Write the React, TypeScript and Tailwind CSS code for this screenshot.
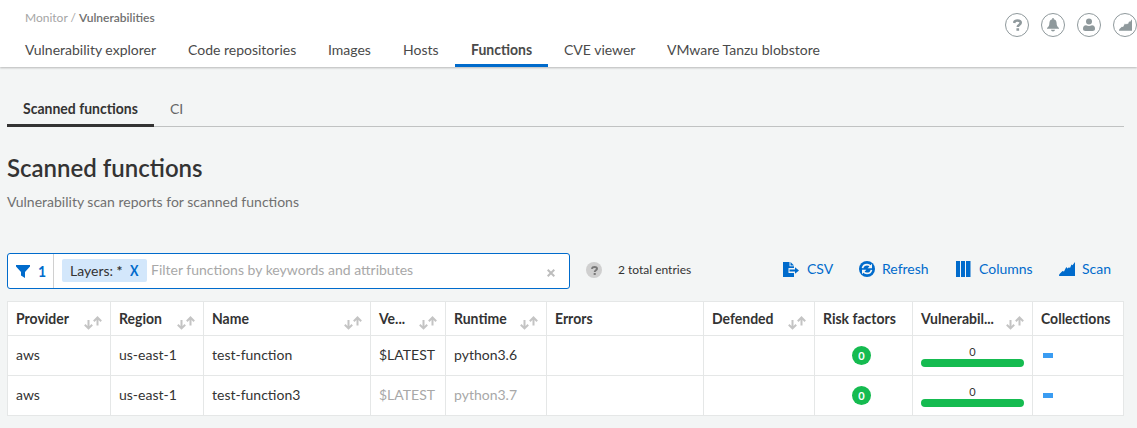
import React from "react";

const TABS: { label: string; width: string; active?: boolean }[] = [
  { label: "Vulnerability explorer", width: "w-[163px]" },
  { label: "Code repositories", width: "w-[140px]" },
  { label: "Images", width: "w-[75px]" },
  { label: "Hosts", width: "w-[68px]" },
  { label: "Functions", width: "w-[93px]", active: true },
  { label: "CVE viewer", width: "w-[103px]" },
  { label: "VMware Tanzu blobstore", width: "w-[185px]" },
];

const GRID =
  "grid grid-cols-[103px_93px_167px_75px_101px_157px_111px_98px_120px_91px]";

const HEADERS: { label: string; sortable?: boolean }[] = [
  { label: "Provider", sortable: true },
  { label: "Region", sortable: true },
  { label: "Name", sortable: true },
  { label: "Ve...", sortable: true },
  { label: "Runtime", sortable: true },
  { label: "Errors" },
  { label: "Defended", sortable: true },
  { label: "Risk factors" },
  { label: "Vulnerabil...", sortable: true },
  { label: "Collections" },
];

const ROWS = [
  { provider: "aws", region: "us-east-1", name: "test-function", version: "$LATEST", runtime: "python3.6", muted: false },
  { provider: "aws", region: "us-east-1", name: "test-function3", version: "$LATEST", runtime: "python3.7", muted: true },
];

function Strong({ children }: { children: React.ReactNode }) {
  return <span className="inline-block origin-[50%_74%] scale-y-110 font-bold">{children}</span>;
}

function SortIcon() {
  return (
    <svg className="mt-[6px] shrink-0" width="18" height="16" viewBox="0 0 18 16" fill="none" stroke="#c4c4c4" strokeWidth="2">
      <path d="M4.500 5v8.500M.8 9.700l3.700 3.700 3.700-3.700" />
      <path d="M13.500 10.500V2.500M9.800 6.200l3.700-3.700 3.700 3.700" />
    </svg>
  );
}

function AreaChart({ className }: { className: string }) {
  return (
    <svg className={className} viewBox="0 0 16 14" fill="currentColor">
      <path d="M0 14 .3 12.300 3.500 9 5 9.500 7.300 5 8.500 6.500 10 5.300 11 6 12.500 2.500 13.500 3.300 16 0V14Z" />
    </svg>
  );
}

function HeaderIcon({ children }: { children: React.ReactNode }) {
  return (
    <span className="flex size-6 shrink-0 items-center justify-center rounded-full border border-[#8f999c] text-[#8f999c]">
      {children}
    </span>
  );
}

function QuestionMark({ className }: { className: string }) {
  return (
    <svg className={className} viewBox="0 0 10 13" fill="none" stroke="currentColor" strokeWidth="2.800">
      <path d="M1.200 4.200C1.500 2.300 3 1.500 5 1.500c2.200 0 3.600 1 3.600 2.600 0 2.200-3.300 2-3.300 4.700" />
      <path d="M3.800 11.500h3" />
    </svg>
  );
}

export default function App() {
  return (
    <div className="flex h-[428px] w-[1137px] flex-col overflow-hidden bg-[#f3f5f5] font-['Lato',sans-serif] text-[14px] leading-5 whitespace-nowrap text-[#333]">
      <header className="flex h-[67px] shrink-0 justify-between bg-white shadow-[0_1px_2px_rgba(0,0,0,0.25)]">
        <div className="flex flex-col">
          <div className="mt-[10px] h-4 pl-[25px] text-[12px] leading-4 text-[#707070]">
            <span className="text-[#a5a5a5]">Monitor /</span> <span className="font-semibold">Vulnerabilities</span>
          </div>
          <nav className="mt-[9px] flex h-8 pl-[9px] text-[#4a4a4a]">
            {TABS.map((t) => (
              <a
                key={t.label}
                className={`${t.width} shrink-0 pt-[5px] pl-4 ${t.active ? "border-b-[3px] border-[#006bcc]" : ""}`}
              >
                {t.active ? <Strong>{t.label}</Strong> : t.label}
              </a>
            ))}
          </nav>
        </div>
        <div className="mt-[13px] flex w-[132px] gap-3">
          <HeaderIcon>
            <QuestionMark className="h-3 w-[9px]" />
          </HeaderIcon>
          <HeaderIcon>
            <svg className="h-[14px] w-3" viewBox="0 0 12 14" fill="currentColor">
              <path d="M5.300 0h1.400v1.200C8.800 1.600 9.500 3 9.600 5c.1 2.500.7 3.700 2.400 5v.8H0V10c1.700-1.300 2.300-2.500 2.400-5 .1-2 .8-3.400 2.900-3.800ZM4 11.800h4c-.2 1-.9 1.600-2 1.600s-1.800-.6-2-1.600Z" />
            </svg>
          </HeaderIcon>
          <HeaderIcon>
            <svg className="h-[14px] w-3" viewBox="0 0 12 14" fill="currentColor">
              <circle cx="6" cy="3.400" r="3" />
              <path d="M0 10.500c0-2 1-3 3-3.200 2 .8 4 .8 6 0 2 .2 3 1.200 3 3.200 0 1.800-.8 2.500-2.500 2.500h-7C.8 13 0 12.300 0 10.500Z" />
            </svg>
          </HeaderIcon>
          <HeaderIcon>
            <AreaChart className="h-3 w-[13px]" />
          </HeaderIcon>
        </div>
      </header>

      <main className="flex flex-col pr-[13px] pl-[7px]">
        <nav className="mt-[25px] flex h-[35px]">
          <a className="w-[147px] border-b-[3px] border-[#333] pt-[7px] pl-4">
            <Strong>Scanned functions</Strong>
          </a>
          <a className="flex-1 border-b border-[#c0c2c2] pt-[7px] pl-4 text-[#666]">CI</a>
        </nav>

        <h1 className="mt-[25px] h-8 text-[24px] leading-8 font-semibold">Scanned functions</h1>
        <p className="mt-2 h-5 text-[#707070]">Vulnerability scan reports for scanned functions</p>

        <div className="mt-[41px] flex h-9">
          <div className="flex w-[563px] rounded-[3px] border border-[#006bcc] bg-white">
            <div className="flex w-[46px] items-center border-r border-[#d0d0d0] pl-2 text-[#006bcc]">
              <svg className="h-[13px] w-[14px]" viewBox="0 0 14 13" fill="currentColor">
                <path d="M0 0h14v1.500L9 7v6L5 10.500V7L0 1.500Z" />
              </svg>
              <span className="ml-2 pt-px"><Strong>1</Strong></span>
            </div>
            <div className="mt-[5px] ml-2 flex h-[23px] w-[85px] items-center rounded-[2px] bg-[#d3e7fb] pl-2">
              <span className="w-[60px]">Layers: <span className="font-bold">*</span></span>
              <span className="inline-block origin-left scale-x-90 text-[#006bcc]"><Strong>X</Strong></span>
            </div>
            <span className="ml-1 flex-1 pt-[6px] text-[#a8a8a8]">Filter functions by keywords and attributes</span>
            <svg className="mt-[15px] mr-[14px] size-2" viewBox="0 0 8 8" stroke="#bdbdbd" strokeWidth="2">
              <path d="M.7.7l6.600 6.600M7.300.7L.7 7.300" />
            </svg>
          </div>
          <span className="mt-[9px] ml-4 flex size-4 items-center justify-center rounded-full bg-[#cfcfcf] text-[#777]">
            <QuestionMark className="h-[9px] w-[7px]" />
          </span>
          <span className="mt-[7px] ml-4 text-[12px]">2 total entries</span>
          <div className="ml-auto flex h-8 w-[341px] items-center text-[#006bcc]">
            <div className="flex w-[76px] items-center">
              <svg className="h-[15px] w-4" viewBox="0 0 16 15" fill="currentColor">
                <path d="M0 0h6.500v4.300H11V6H5.500v5H11v4H0Z" />
                <path d="M7.500 0 11 3.400H7.500Z" />
                <path d="M6.500 7.500H12V5.300L16 8.500l-4 3.200V9.500H6.500Z" />
              </svg>
              <span className="ml-2">CSV</span>
            </div>
            <div className="flex w-[97px] items-center">
              <svg className="size-4" viewBox="0 0 16 16">
                <circle cx="8" cy="8" r="8" fill="currentColor" />
                <path d="M3.500 7.200C4 4.800 5.800 3.600 8 3.600c1.500 0 2.600.6 3.400 1.700M12.500 8.800C12 11.200 10.200 12.400 8 12.400c-1.500 0-2.600-.6-3.400-1.700" fill="none" stroke="#f3f5f5" strokeWidth="1.700" />
                <path d="M13 2.800v4.400H8.600ZM3 13.200V8.800h4.400Z" fill="#f3f5f5" />
              </svg>
              <span className="ml-[7px]">Refresh</span>
            </div>
            <div className="flex w-[103px] items-center">
              <svg className="h-4 w-[15px]" viewBox="0 0 15 16" fill="currentColor">
                <path d="M0 0h4v16H0ZM5 0h4v16H5ZM10 0h4.500v16H10Z" />
              </svg>
              <span className="ml-2">Columns</span>
            </div>
            <div className="flex items-center">
              <AreaChart className="h-[14px] w-4" />
              <span className="ml-[7px]">Scan</span>
            </div>
          </div>
        </div>

        <div className="mt-3 w-[1117px] border-t border-l border-[#e5e7e7] bg-white">
          <div className={`${GRID} h-[34px]`}>
            {HEADERS.map((h) => (
              <div key={h.label} className="flex items-start justify-between border-r border-b border-[#e5e7e7] pt-[7px] pr-2 pl-2">
                <Strong>{h.label}</Strong>
                {h.sortable && <SortIcon />}
              </div>
            ))}
          </div>
          {ROWS.map((r) => (
            <div key={r.name} className={`${GRID} h-10 *:border-r *:border-b *:border-[#e5e7e7] *:px-2 *:pt-[9px]`}>
              <div>{r.provider}</div>
              <div>{r.region}</div>
              <div>{r.name}</div>
              <div className={r.muted ? "text-[#a8a8a8]" : ""}>{r.version}</div>
              <div className={r.muted ? "text-[#a8a8a8]" : ""}>{r.runtime}</div>
              <div />
              <div />
              <div>
                <span className="mt-px ml-[29px] flex size-[19px] items-center justify-center rounded-full bg-[#15bb50] text-[11px] leading-none text-white">
                  <Strong>0</Strong>
                </span>
              </div>
              <div className="flex flex-col">
                <span className="text-center text-[11px] leading-[14px]">0</span>
                <span className="h-2 rounded-full bg-[#15bb50]" />
              </div>
              <div>
                <span className="mt-2 ml-[2px] block h-[5px] w-[10px] bg-[#3a9cf2]" />
              </div>
            </div>
          ))}
        </div>
      </main>
    </div>
  );
}
